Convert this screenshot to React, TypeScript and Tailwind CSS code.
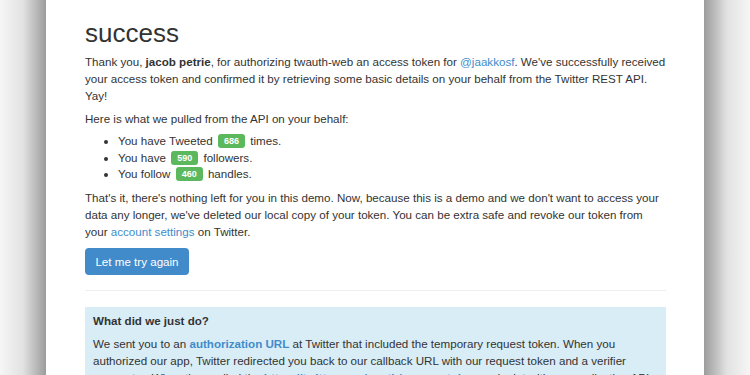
const Badge = ({ children }: { children: React.ReactNode }) => (
  <span className="mx-[2px] inline-block rounded-[3px] bg-[#5cb85c] px-[6px] text-[9px] leading-[14px] font-bold text-white align-[1px]">
    {children}
  </span>
);

const A = ({ children, bold }: { children: React.ReactNode; bold?: boolean }) => (
  <a href="#" className={bold ? 'font-bold text-[#428bca]' : 'text-[#428bca]'}>
    {children}
  </a>
);

export default function App() {
  return (
    <div className="flex h-[375px] w-[750px] overflow-hidden bg-white font-['Liberation_Sans',Arial,sans-serif] text-[11.6px] leading-[17px] text-[#333]">
      <div className="w-[46px] shrink-0 bg-gradient-to-r from-[#f6f6f6] via-[#e2e2e2] to-[#9c9c9c]" />

      <main className="flex-1 pt-[16px] pr-[36px] pl-[39px]">
        <h1 className="text-[26px] leading-[34px] font-medium">success</h1>

        <p className="mt-[3px]">
          Thank you, <b>jacob petrie</b>, for authorizing twauth-web an access token for{' '}
          <A>@jaakkosf</A>. We've successfully received your access token and confirmed it by
          retrieving some basic details on your behalf from the Twitter REST API. Yay!
        </p>

        <p className="mt-[6px]">Here is what we pulled from the API on your behalf:</p>

        <ul className="mt-[6px] list-disc pl-[33px] leading-[16.5px]">
          <li>
            You have Tweeted <Badge>686</Badge> times.
          </li>
          <li>
            You have <Badge>590</Badge> followers.
          </li>
          <li>
            You follow <Badge>460</Badge> handles.
          </li>
        </ul>

        <p className="mt-[6px] pr-[2px]">
          That's it, there's nothing left for you in this demo. Now, because this is a demo and we
          don't want to access your data any longer, we've deleted our local copy of your token.
          You can be extra safe and revoke our token from your <A>account settings</A> on Twitter.
        </p>

        <button className="mt-[8px] h-[27px] w-[104px] rounded-[4px] bg-[#428bca] text-[11.6px] text-white">
          Let me try again
        </button>

        <hr className="mt-[15px] mr-[2px] border-[#eeeeee]" />

        <div className="mt-[16px] mr-[2px] bg-[#d9edf7] px-[8px] pt-[5px] pb-[8px]">
          <h4 className="font-bold">What did we just do?</h4>
          <p className="mt-[6px]">
            We sent you to an <A bold>authorization URL</A> at Twitter that included the temporary
            request token. When you authorized our app, Twitter redirected you back to our callback
            URL with our request token and a verifier parameter. When then called the{' '}
            <A bold>https://twitter.com/oauth/access_token</A> endpoint with our application API
            credentials and received an access token.
          </p>
        </div>
      </main>

      <div className="w-[46px] shrink-0 bg-gradient-to-l from-[#f6f6f6] via-[#e2e2e2] to-[#9c9c9c]" />
    </div>
  );
}
